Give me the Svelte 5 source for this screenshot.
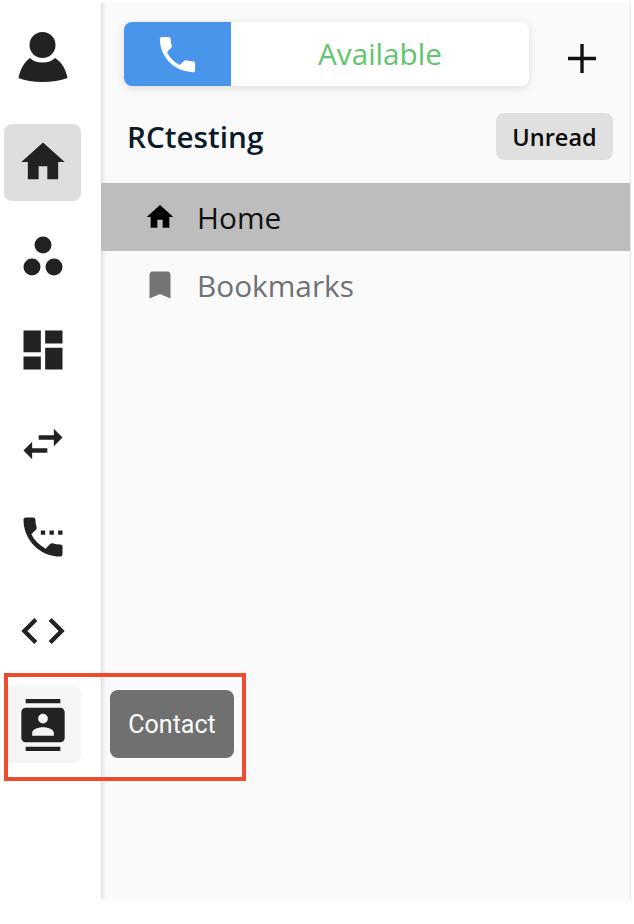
<script>
	const railItems = [
		{ id: 'home', active: true, d: 'M10 20v-6h4v6h5v-8h3L12 3 2 12h3v8z' },
		{ id: 'groups', d: '' },
		{ id: 'dashboard', d: 'M3 13h8V3H3v10zm0 8h8v-6H3v6zm10 0h8V11h-8v10zm0-18v6h8V3h-8z' },
		{ id: 'swap', d: 'M6.99 11L3 15l3.99 4v-3H14v-2H6.99v-3zM21 9l-4-4v3h-7v2h7v3l4-4z' },
		{
			id: 'phone',
			d: 'M13 9h-2v2h2V9zm4 0h-2v2h2V9zm3 6.5c-1.25 0-2.45-.2-3.57-.57-.35-.11-.74-.03-1.02.24l-2.2 2.2c-2.83-1.44-5.15-3.75-6.59-6.59l2.2-2.21c.28-.27.36-.66.25-1.01C8.7 6.45 8.5 5.25 8.5 4c0-.55-.45-1-1-1H4c-.55 0-1 .45-1 1 0 9.39 7.61 17 17 17 .55 0 1-.45 1-1v-3.5c0-.55-.45-1-1-1zM19 9v2h2V9h-2z'
		},
		{ id: 'code', d: 'M9.4 16.6L4.8 12l4.6-4.6L8 6l-6 6 6 6 1.4-1.4zm5.2 0l4.6-4.6-4.6-4.6L16 6l6 6-6 6-1.4-1.4z' },
		{
			id: 'contact',
			hover: true,
			d: 'M20 0H4v2h16V0zM4 24h16v-2H4v2zM20 4H4c-1.1 0-2 .9-2 2v12c0 1.1.9 2 2 2h16c1.1 0 2-.9 2-2V6c0-1.1-.9-2-2-2zm-8 2.75c1.24 0 2.25 1.01 2.25 2.25s-1.01 2.25-2.25 2.25S9.75 10.24 9.75 9 10.76 6.75 12 6.75zM17 17H7v-1.5c0-1.67 3.33-2.5 5-2.5s5 .83 5 2.5V17z'
		}
	];
</script>

<div class="layout">
	<nav class="rail">
		<div class="avatar">
			<svg width="52" height="54" viewBox="0 0 52 54" fill="#222">
				<path d="M13 29 C7 33 3 41 1.5 49 C8 51.5 16 53 25.5 53 C35 53 43.5 51.5 50.5 49 C49 41 45 33 38 29 C35 32 31 33.5 25.5 33.5 C20 33.5 16 32 13 29 Z" />
				<circle cx="25.5" cy="16" r="13" />
			</svg>
		</div>
		{#each railItems as item (item.id)}
			<div class="rail-item" class:active={item.active} class:hover={item.hover}>
				{#if item.id === 'groups'}
					<svg width="52" height="52" viewBox="0 0 52 52" fill="#222">
						<circle cx="26" cy="15" r="8.5" />
						<circle cx="15" cy="37" r="8.5" />
						<circle cx="37" cy="37" r="8.5" />
					</svg>
				{:else}
					<svg width="52" height="52" viewBox="0 0 24 24" fill="#222"><path d={item.d} /></svg>
				{/if}
			</div>
		{/each}
	</nav>

	<main class="panel">
		<div class="top">
			<div class="status">
				<div class="status-icon">
					<svg width="47" height="47" viewBox="0 0 24 24" fill="#fff">
						<path d="M6.62 10.79c1.44 2.83 3.76 5.14 6.59 6.59l2.2-2.2c.27-.27.67-.36 1.02-.24 1.12.37 2.33.57 3.57.57.55 0 1 .45 1 1V20c0 .55-.45 1-1 1-9.39 0-17-7.61-17-17 0-.55.45-1 1-1h3.5c.55 0 1 .45 1 1 0 1.25.2 2.45.57 3.57.11.35.03.74-.25 1.02l-2.2 2.2z" />
					</svg>
				</div>
				<span class="status-label">Available</span>
			</div>
			<svg class="plus" width="28" height="29" viewBox="0 0 28 29" stroke="#111" stroke-width="3.4">
				<path d="M14 0v29M0 14.5h28" />
			</svg>
		</div>

		<div class="title-row">
			<h1>RCtesting</h1>
			<span class="pill">Unread</span>
		</div>

		<div class="row selected">
			<svg width="32" height="32" viewBox="0 0 24 24" fill="#000"><path d="M10 20v-6h4v6h5v-8h3L12 3 2 12h3v8z" /></svg>
			<span>Home</span>
		</div>
		<div class="row">
			<svg width="32" height="36" viewBox="3 0 18 24" fill="#757575"><path d="M17 3H7c-1.1 0-2 .9-2 2v16l7-3 7 3V5c0-1.1-.9-2-2-2z" /></svg>
			<span>Bookmarks</span>
		</div>
	</main>

	<div class="tooltip">Contact</div>
	<div class="highlight"></div>
</div>

<style>
	:global(body) {
		background: #fff;
	}

	.layout {
		position: relative;
		display: flex;
		width: 634px;
		height: 924px;
		font-family: 'Open Sans', sans-serif;
		overflow: hidden;
	}

	.rail {
		flex: 0 0 101px;
		display: flex;
		flex-direction: column;
		gap: 16.7px;
		padding-left: 4px;
		box-sizing: border-box;
		background: #fff;
	}

	.avatar {
		display: flex;
		justify-content: center;
		width: 77px;
		height: 107px;
		margin-bottom: 0.3px;
		padding-top: 29px;
		box-sizing: border-box;
	}

	.rail-item {
		display: flex;
		align-items: center;
		justify-content: center;
		flex: 0 0 77px;
		width: 77px;
		border-radius: 8px;
	}

	.rail-item.active {
		background: #dedede;
	}

	.rail-item.hover {
		background: #f5f5f5;
	}

	.panel {
		width: 530px;
		height: 896px;
		margin-top: 3px;
		box-sizing: border-box;
		border-right: 1px solid #e6e6e6;
		background: #fafafa;
		box-shadow: inset 5px 0 5px -4px rgb(0 0 0 / 0.16);
	}

	.top {
		display: flex;
		align-items: center;
		gap: 39px;
		padding: 19px 0 0 23px;
	}

	.status {
		display: flex;
		width: 405px;
		height: 64px;
		border-radius: 8px;
		background: #fff;
		box-shadow: 0 2px 8px rgb(0 0 0 / 0.12);
		overflow: hidden;
	}

	.status-icon {
		display: flex;
		align-items: center;
		justify-content: center;
		flex: 0 0 107px;
		background: #4a95ec;
	}

	.status-label {
		flex: 1;
		text-align: center;
		font-size: 29.7px;
		line-height: 64px;
		color: #63c46f;
	}

	.plus {
		flex: none;
		margin-top: 8px;
	}

	.title-row {
		display: flex;
		align-items: center;
		justify-content: space-between;
		height: 47px;
		margin-top: 27px;
		padding: 0 17px 0 26px;
	}

	h1 {
		margin: 0;
		font-size: 29.7px;
		line-height: 47px;
		font-weight: 600;
		color: #0c1a2b;
	}

	.pill {
		display: flex;
		align-items: center;
		justify-content: center;
		width: 117px;
		height: 47px;
		border-radius: 8px;
		background: #e0e0e0;
		font-size: 23.5px;
		font-weight: 600;
		color: #0b0b0b;
	}

	.row {
		display: flex;
		align-items: center;
		gap: 21px;
		height: 68px;
		padding-left: 43px;
		font-size: 29.8px;
		color: #6e7276;
	}

	.title-row + .row {
		margin-top: 23px;
	}

	.row.selected {
		background: #bdbdbd;
		color: #111;
	}

	.tooltip {
		position: absolute;
		left: 110px;
		top: 690px;
		display: flex;
		align-items: center;
		justify-content: center;
		width: 124px;
		height: 68px;
		border-radius: 8px;
		background: #707070;
		font-family: Roboto, sans-serif;
		font-size: 25px;
		color: #fff;
	}

	.highlight {
		position: absolute;
		left: 4px;
		top: 673px;
		width: 242px;
		height: 108px;
		box-sizing: border-box;
		border: 4px solid #ee4a2c;
	}
</style>
